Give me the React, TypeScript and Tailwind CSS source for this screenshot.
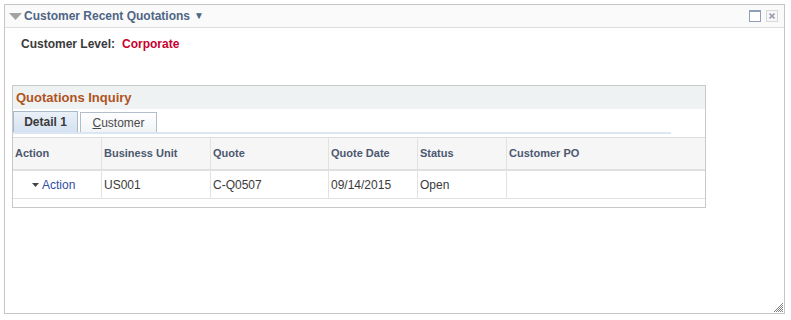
import React from "react"

const cols = [
  { label: "Action", w: "w-[89px]" },
  { label: "Business Unit", w: "w-[109px]" },
  { label: "Quote", w: "w-[118px]" },
  { label: "Quote Date", w: "w-[89px]" },
  { label: "Status", w: "w-[89px]" },
  { label: "Customer PO", w: "w-[198px]" },
]

const row = ["", "US001", "C-Q0507", "09/14/2015", "Open", ""]

function Grip() {
  // little checkered resize handle in the bottom right corner
  const dots: [number, number][] = []
  for (let y = 0; y < 9; y++) {
    for (let x = 0; x < 9; x++) {
      if (x + y >= 8 && (x + y) % 2 === 0) dots.push([x, y])
    }
  }
  return (
    <svg width="9" height="9" className="absolute right-[1px] bottom-[1px]">
      {dots.map(([x, y]) => (
        <rect key={`${x}-${y}`} x={x} y={y} width="1" height="1" fill="#808080" />
      ))}
    </svg>
  )
}

export default function App() {
  return (
    <div className="w-[791px] h-[320px] bg-white p-[4px] font-['Liberation_Sans',Arial,sans-serif] text-[12px] text-[#3a3a3a]">
      <div className="relative w-[781px] h-[310px] border border-[#c6c6c6] flex flex-col">
        {/* pagelet header */}
        <div className="h-[23px] shrink-0 border-b border-[#dedede] bg-[#fafafa] flex items-center pl-[4px] pr-[6px]">
          <svg width="13" height="8" viewBox="0 0 13 8" className="mr-[2px] mt-[1px]">
            <polygon points="0,0 13,0 6.5,7" fill="#a3a3a3" />
          </svg>
          <span className="font-bold text-[#4f6585] leading-none">Customer Recent Quotations</span>
          <span className="ml-[4px] text-[10px] text-[#4f6585] leading-none">▼</span>
          <div className="ml-auto flex items-center gap-[5px] mt-[-1px]">
            <div className="w-[12px] h-[12px] border border-[#8fa0b6] border-t-[2px] bg-white" />
            <div className="w-[12px] h-[12px] border border-[#d8d8d8] bg-[#f7f7f7] flex items-center justify-center">
              <svg width="6" height="6" viewBox="0 0 6 6">
                <path d="M0.5 0.5 L5.5 5.5 M5.5 0.5 L0.5 5.5" stroke="#9a9fb5" strokeWidth="1.6" />
              </svg>
            </div>
          </div>
        </div>

        {/* body */}
        <div className="flex flex-col pt-[8px]">
          <div className="h-[16px] flex items-center pl-[16px] font-bold">
            <span className="text-[#3a3a3a]">Customer Level:</span>
            <span className="ml-[7px] text-[#c8002d]">Corporate</span>
          </div>

          <div className="mt-[33px] ml-[7px] w-[694px] border border-[#c9c9c9] bg-white">
            <div className="h-[23px] bg-[#eef2f3] flex items-center pl-[3px] text-[13px] font-bold text-[#b0541c]">
              Quotations Inquiry
            </div>

            {/* tabs */}
            <div className="pt-[2px] flex flex-col">
              <div className="flex items-end h-[21px] gap-[2px]">
                <div className="h-[21px] w-[65px] border border-b-0 border-[#a9b9cc] bg-gradient-to-b from-[#eaf0f7] to-[#d5e2f1] flex items-center justify-center font-bold text-[#3a3a3a]">
                  Detail 1
                </div>
                <div className="h-[20px] w-[77px] border border-b-0 border-[#b4bdcc] bg-gradient-to-b from-white to-[#f1f3f6] flex items-center justify-center text-[#4a4a4a]">
                  <span>
                    <span className="underline">C</span>ustomer
                  </span>
                </div>
              </div>
              <div className="h-[2px] w-[658px] bg-[#dbe6f3]" />
            </div>

            {/* grid */}
            <div className="mt-[3px] border-t border-[#dddddd]">
              <div className="flex h-[33px] bg-[#f6f6f6] border-b-[2px] border-[#e0e0e0]">
                {cols.map((c, i) => (
                  <div
                    key={c.label}
                    className={`${c.w} flex items-center font-bold text-[11px] text-[#4c5870] pl-[2px] ${i < cols.length - 1 ? "border-r border-[#e2e2e2]" : ""}`}
                  >
                    {c.label}
                  </div>
                ))}
              </div>
              <div className="flex h-[28px] border-b border-[#e2e2e2]">
                {cols.map((c, i) => (
                  <div
                    key={c.label}
                    className={`${c.w} flex items-center ${i === 0 ? "pl-[19px]" : "pl-[2px]"} ${i < cols.length - 1 ? "border-r border-[#e2e2e2]" : ""}`}
                  >
                    {i === 0 ? (
                      <span className="flex items-center text-[#2f4ea8]">
                        <svg width="7" height="4" viewBox="0 0 7 4" className="mr-[3px]">
                          <polygon points="0,0 7,0 3.5,4" fill="#444" />
                        </svg>
                        Action
                      </span>
                    ) : (
                      row[i]
                    )}
                  </div>
                ))}
              </div>
              <div className="h-[8px]" />
            </div>
          </div>
        </div>

        <Grip />
      </div>
    </div>
  )
}
